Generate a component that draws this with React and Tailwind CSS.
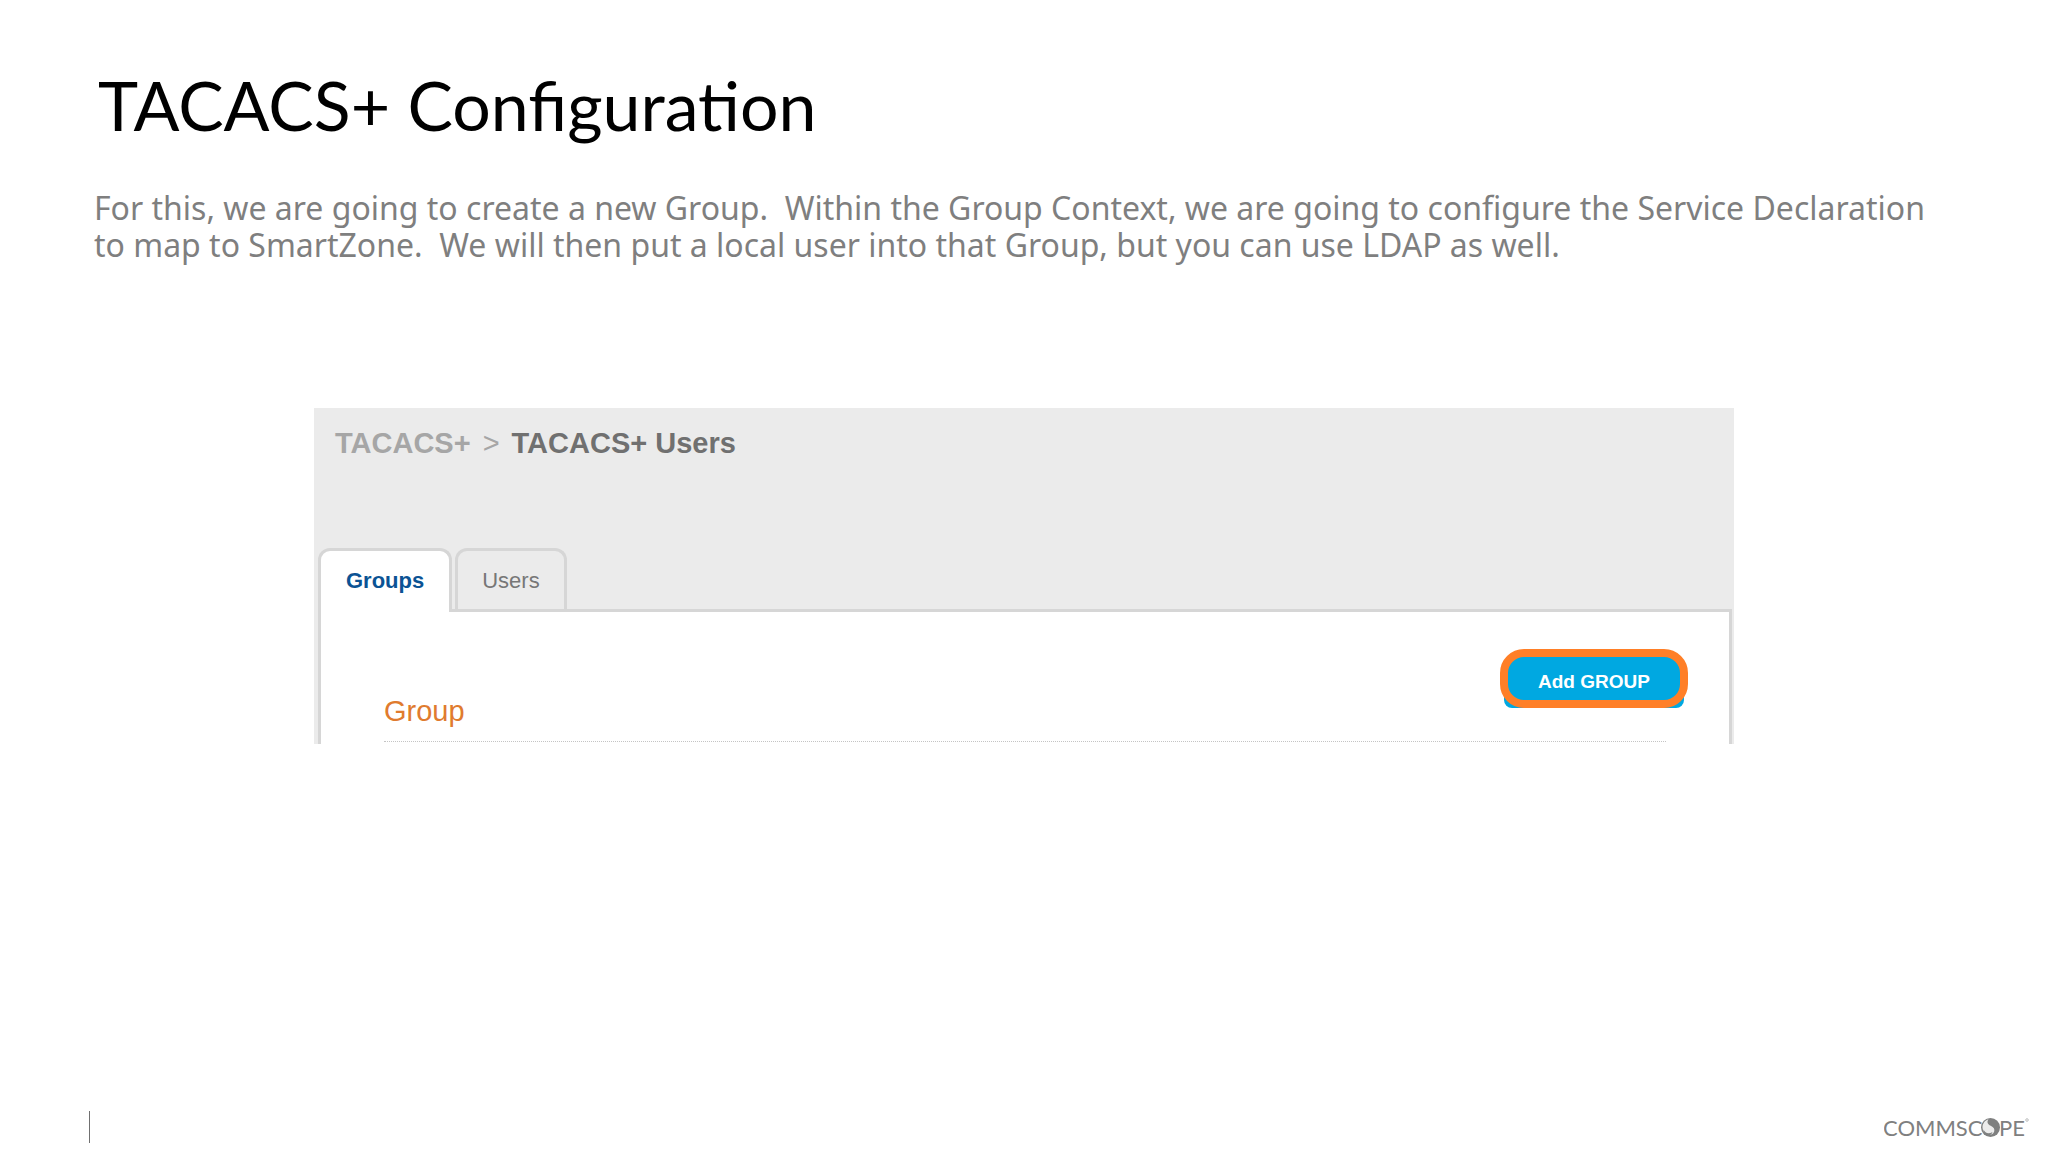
import React, { useState } from "react";

const tabs = ["Groups", "Users"];

const CommScopeLogo = () => (
  <svg
    className="h-8 w-[146px] text-[#7f8080]"
    viewBox="0 0 146 32"
    fill="currentColor"
    role="img"
    aria-label="CommScope"
  >
    <g fontFamily="Lato, sans-serif" fontSize="22">
      <text x="-1" y="25">COMMSC</text>
      <text x="115" y="25">PE</text>
    </g>
    {/* globe used as the letter O */}
    <circle cx="106.5" cy="16.5" r="9.5" />
    <path
      d="M104.5 8.2c-2 2.600-.8 5.200 2.200 6.600 3 1.400 4.400 3.400 3.400 6-.9 2.200-3 3.200-5.300 2.800-3.800-.7-6.300-3.800-6.300-7.400 0-3.700 2.400-6.900 6-8z"
      fill="#fff"
      opacity=".85"
    />
    <path d="M99.500 18.500c1.500 3.500 5 5 9 2.500-1 3-3.500 4-6 3-1.800-.8-3-3-3-5.500z" />
    <circle cx="143" cy="9" r="1.300" fill="none" stroke="currentColor" strokeWidth=".5" />
  </svg>
);

const App = () => {
  const [activeTab, setActiveTab] = useState("Groups");

  return (
    <div className="flex min-h-screen flex-col justify-between bg-white">
      <div>
        {/* Heading */}
        <header className="px-[94px] pt-[62px]">
          <h1 className="pl-1 font-[Lato,sans-serif] text-[68px] leading-[86px] text-black">
            TACACS+ Configuration
          </h1>
          <p className="mt-[41px] font-['Noto_Sans',sans-serif] text-[32px] leading-[37px] text-[#7f7f7f]">
            For this, we are going to create a new Group.&nbsp; Within the Group Context, we are going to configure the Service Declaration
            to map to SmartZone.&nbsp; We will then put a local user into that Group, but you can use LDAP as well.
          </p>
        </header>

        {/* Users panel */}
        <main className="mx-auto mt-[145px] max-w-[1420px] bg-[#ebebeb] pr-0.5 pl-1 font-['Liberation_Sans',sans-serif]">
          <nav
            aria-label="Breadcrumb"
            className="flex h-[140px] items-start pt-[19px] pl-[17px] text-[29px] leading-8 font-bold"
          >
            <a href="#tacacs" className="text-[#a6a6a6]">TACACS+</a>
            <span className="mx-3 font-normal text-[#a6a6a6]">&gt;</span>
            <span className="text-[#707070]">TACACS+ Users</span>
          </nav>

          <div role="tablist" className="flex gap-[3px]">
            {tabs.map((tab) => (
              <button
                key={tab}
                type="button"
                role="tab"
                aria-selected={activeTab === tab}
                onClick={() => setActiveTab(tab)}
                className={
                  activeTab === tab
                    ? "relative -mb-[3px] h-16 rounded-t-xl border-3 border-b-0 border-[#d6d6d6] bg-white px-[25px] pb-[3px] text-[22px] font-bold text-[#0b5394]"
                    : "h-[61px] rounded-t-xl border-3 border-b-0 border-[#d6d6d6] px-6 text-[22px] text-[#777777]"
                }
              >
                {tab}
              </button>
            ))}
          </div>

          <section className="border-3 border-b-0 border-[#d6d6d6] bg-white pr-[41px] pb-0.5 pl-[63px]">
            <div className="flex h-[129px] items-start justify-between">
              <h2 className="pt-[83px] text-[29px] leading-8 text-[#e07b2e]">Group</h2>
              {/* blue base shows under the rounded highlight ring */}
              <div className="relative mt-[37px] h-[59px] w-[188px]">
                <div className="absolute inset-x-1 top-4 bottom-0 rounded-b-lg bg-[#00a8e1]" />
                <button
                  type="button"
                  className="absolute inset-0 rounded-3xl border-8 border-[#ff7f27] bg-[#00a8e1] pt-1.5 text-[19px] leading-6 font-bold text-white"
                >
                  Add GROUP
                </button>
              </div>
            </div>
            <hr className="mr-[22px] border-t border-dotted border-[#c4c4c4]" />
          </section>
        </main>
      </div>

      <footer className="flex items-center justify-between pr-[18px] pb-[9px] pl-[89px]">
        <div className="h-8 w-px bg-[#707070]" />
        <CommScopeLogo />
      </footer>
    </div>
  );
};

export default App;
